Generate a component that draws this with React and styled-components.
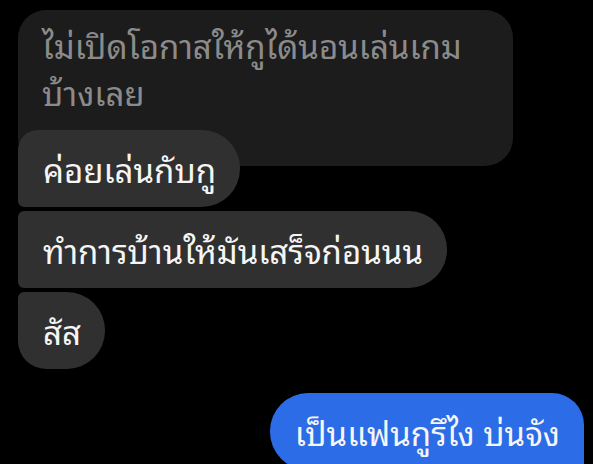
import React from "react"
import styled, { createGlobalStyle } from "styled-components"

const GlobalStyle = createGlobalStyle`
  html, body {
    margin: 0;
    padding: 0;
    background: #000;
    overflow: hidden;
  }
  body {
    font-family: "Noto Sans Thai Looped", "Loma", "Garuda", "Noto Sans", "Noto Sans Thai", sans-serif;
  }
`

const Thread = styled.div`
  width: 593px;
  height: 464px;
  box-sizing: border-box;
  padding: 10px 9px 0 18px;
  display: flex;
  flex-direction: column;
  align-items: flex-start;
  overflow: hidden;

  & > * {
    flex-shrink: 0;
  }
`

const Quoted = styled.div`
  width: 495px;
  height: 156px;
  box-sizing: border-box;
  padding: 11px 24px 0 24px;
  background: #1c1c1c;
  border-radius: 28px;
  color: #8b8b8b;
  font-size: 33px;
  line-height: 47px;
`

const Group = styled.div`
  margin-top: -36px;
  display: flex;
  flex-direction: column;
  align-items: flex-start;
  gap: 4px;
`

const Bubble = styled.div`
  height: 77px;
  box-sizing: border-box;
  padding: 0 24px 0 25px;
  display: inline-flex;
  align-items: center;
  background: ${({ $mine }) => ($mine ? "#2c6ce6" : "#303030")};
  color: #f5f5f5;
  font-size: 33px;
  white-space: nowrap;
  border-radius: ${({ $corners }) => $corners};
`

const Outgoing = styled.div`
  align-self: flex-end;
  margin-top: 24px;
`

const App = () => {
  return (
    <>
      <GlobalStyle />
      <Thread>
        <Quoted>ไม่เปิดโอกาสให้กูได้นอนเล่นเกม<br />บ้างเลย</Quoted>
        <Group>
          <Bubble $corners='20px 38px 38px 6px'>ค่อยเล่นกับกู</Bubble>
          <Bubble $corners='6px 38px 38px 6px'>ทำการบ้านให้มันเสร็จก่อนนน</Bubble>
          <Bubble $corners='6px 38px 38px 28px'>สัส</Bubble>
        </Group>
        <Outgoing>
          <Bubble $mine $corners='38px 32px 6px 38px'>เป็นแฟนกูรึไง บ่นจัง</Bubble>
        </Outgoing>
      </Thread>
    </>
  )
}

export default App
